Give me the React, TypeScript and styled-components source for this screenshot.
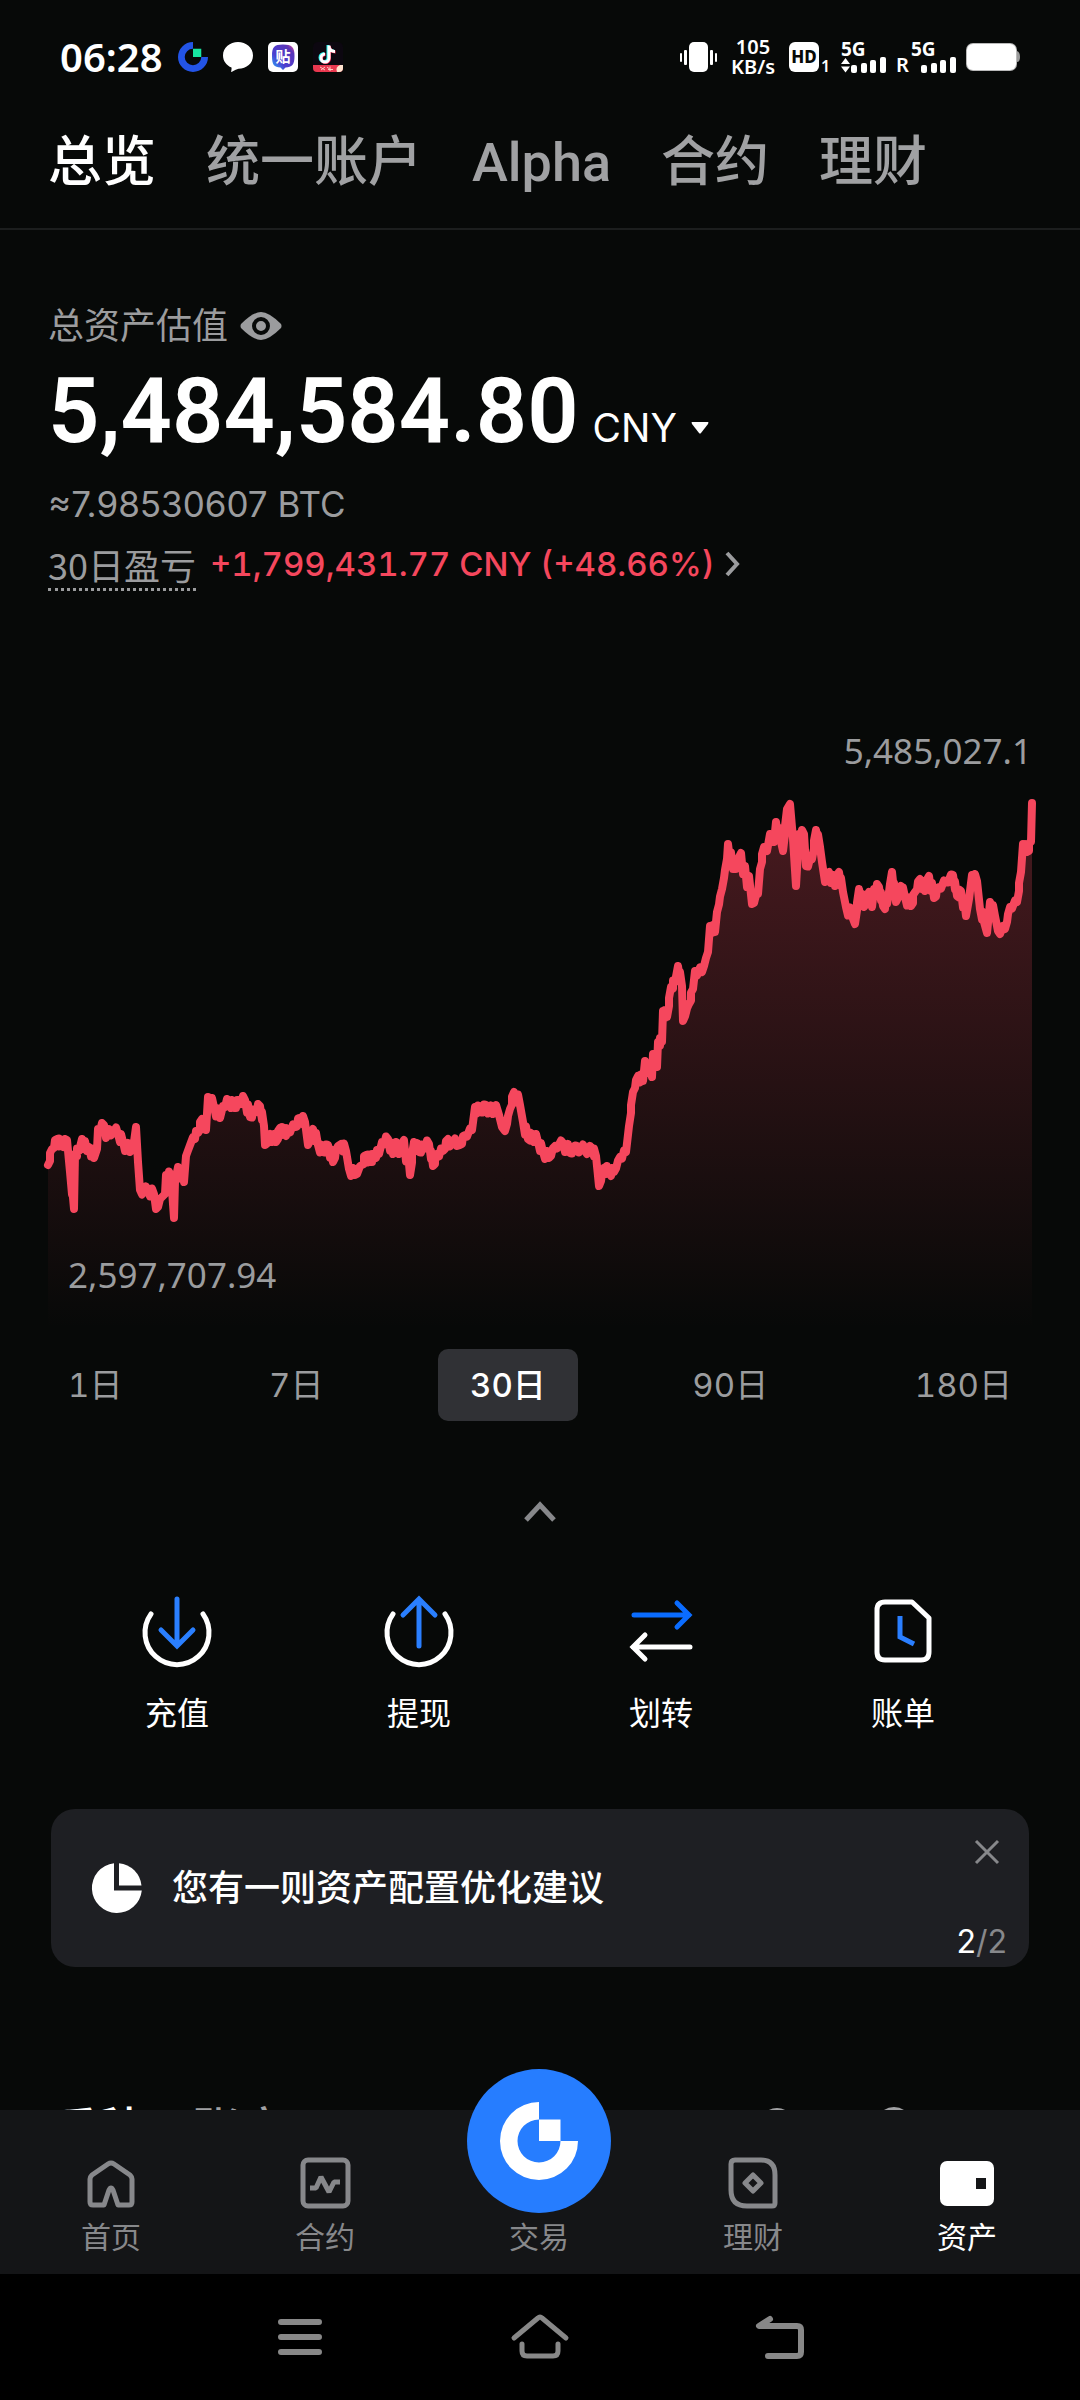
import React, { useState } from "react";
import styled, { createGlobalStyle } from "styled-components";

const color = {
  page: "#070908",
  white: "#ffffff",
  muted: "#9b9c9e",
  tab: "#a0a1a3",
  dim: "#87888b",
  line: "#1c1e1e",
  red: "#f5475d",
  blue: "#267dff",
  card: "#1e1f23",
  chip: "#303135",
  bar: "#141517",
};

const ui = `Inter, "Noto Sans CJK SC", sans-serif`;
const heading = `Roboto, "Noto Sans CJK SC", sans-serif`;
const cjk = `"Noto Sans CJK SC", sans-serif`;
const system = `"Noto Sans", "Noto Sans CJK SC", sans-serif`;

const GlobalStyle = createGlobalStyle`
  * { box-sizing: border-box; }
  body { margin: 0; background: ${color.page}; }
  button { margin: 0; padding: 0; border: 0; background: none; color: inherit; font: inherit; cursor: pointer; }
  a { color: inherit; text-decoration: none; }
  svg { display: block; flex: none; overflow: visible; }
`;

const Screen = styled.div`
  display: flex;
  flex-direction: column;
  height: 100vh;
  background: ${color.page};
  color: ${color.white};
  font-family: ${ui};
`;

const StatusBar = styled.header`
  display: flex;
  justify-content: space-between;
  align-items: center;
  flex: none;
  height: 114px;
  padding: 0 60px;
  font-family: ${system};
`;

const StatusGroup = styled.div<{ $gap: number }>`
  display: flex;
  align-items: center;
  gap: ${(p) => p.$gap}px;
`;

const Clock = styled.time`
  font-size: 40px;
  line-height: 48px;
  font-weight: 600;
`;

const NetSpeed = styled.div`
  display: flex;
  flex-direction: column;
  align-items: center;
  padding: 0 4px;
  font-size: 20px;
  line-height: 20px;
  font-weight: 600;
`;

const AccountTabs = styled.nav`
  display: flex;
  align-items: center;
  flex: none;
  gap: 50px;
  height: 116px;
  padding: 0 48px 16px;
  border-bottom: 2px solid ${color.line};
  white-space: nowrap;
  overflow: hidden;
`;

const AccountTab = styled.button<{ $active?: boolean }>`
  font-family: ${heading};
  font-size: 54px;
  line-height: 72px;
  font-weight: 500;
  color: ${(p) => (p.$active ? color.white : color.tab)};
`;

const Main = styled.main`
  flex: 1;
  min-height: 0;
  overflow-y: auto;
  scrollbar-width: none;
`;

const Summary = styled.section`
  display: flex;
  flex-direction: column;
  align-items: flex-start;
  padding: 72px 48px 0;
`;

const SummaryLabel = styled.div`
  display: flex;
  align-items: center;
  gap: 12px;
  font-size: 36px;
  line-height: 48px;
  color: ${color.muted};
`;

const BalanceRow = styled.div`
  display: flex;
  align-items: baseline;
  gap: 14px;
  margin-top: 10px;
`;

const Balance = styled.strong`
  font-family: ${heading};
  font-size: 90px;
  line-height: 104px;
  font-weight: 600;
`;

const CurrencyButton = styled.button`
  display: flex;
  align-items: center;
  gap: 14px;
  font-size: 39px;
  line-height: 48px;
`;

const BtcValue = styled.div`
  margin-top: 16px;
  font-size: 35px;
  line-height: 48px;
  color: ${color.muted};
`;

const ProfitRow = styled.div`
  display: flex;
  align-items: flex-start;
  gap: 14px;
  margin-top: 12px;
  line-height: 48px;
`;

const ProfitLabel = styled.span`
  border-bottom: 3px dotted ${color.muted};
  font-family: ${cjk};
  font-size: 36px;
  color: ${color.muted};
`;

const ProfitLink = styled.a`
  display: flex;
  align-items: center;
  gap: 10px;
  font-size: 33px;
  font-weight: 500;
  font-variant-numeric: tabular-nums;
  color: ${color.red};
`;

const ChartSection = styled.section`
  padding: 136px 48px 0;
`;

const ChartLabel = styled.div`
  font-family: ${system};
  font-size: 35px;
  line-height: 48px;
  color: ${color.muted};
`;

const MaxLabel = styled(ChartLabel)`
  text-align: right;
`;

const ChartFrame = styled.div`
  position: relative;
  margin-top: 20px;
  svg { width: 100%; height: auto; }
`;

const MinLabel = styled(ChartLabel)`
  position: absolute;
  left: 20px;
  bottom: 36px;
`;

const Ranges = styled.div`
  display: flex;
  justify-content: space-between;
  padding: 14px 36px 0;
`;

const RangeButton = styled.button<{ $active: boolean }>`
  height: 72px;
  padding: 0 32px;
  border-radius: 10px;
  background: ${(p) => (p.$active ? color.chip : "transparent")};
  color: ${(p) => (p.$active ? color.white : color.muted)};
  font-size: 33px;
  line-height: 48px;
  font-weight: ${(p) => (p.$active ? 500 : 400)};
  font-variant-numeric: tabular-nums;
`;

const Collapse = styled.div`
  display: flex;
  justify-content: center;
  padding-top: 66px;
`;

const IconButton = styled.button<{ $size: number }>`
  display: flex;
  align-items: center;
  justify-content: center;
  width: ${(p) => p.$size}px;
  height: ${(p) => p.$size}px;
`;

const Actions = styled.div`
  display: grid;
  grid-template-columns: repeat(4, 1fr);
  padding: 60px 56px 0;
`;

const ActionButton = styled.button`
  display: flex;
  flex-direction: column;
  align-items: center;
  gap: 23px;
  font-size: 32px;
  line-height: 48px;
`;

const Notice = styled.aside`
  display: flex;
  align-items: center;
  gap: 30px;
  min-height: 158px;
  margin: 71px 51px 0;
  padding: 0 22px 0 41px;
  border-radius: 24px;
  background: ${color.card};
`;

const NoticeText = styled.p`
  flex: 1;
  margin: 0;
  font-size: 36px;
  line-height: 48px;
  font-weight: 500;
`;

const NoticeSide = styled.div`
  display: flex;
  flex-direction: column;
  align-items: flex-end;
  justify-content: space-between;
  align-self: stretch;
  padding: 23px 0 9px;
`;

const Pager = styled.span`
  font-size: 32px;
  line-height: 32px;
  color: ${color.dim};
  b { font-weight: 400; color: ${color.white}; }
`;

const ListHeader = styled.div`
  display: flex;
  align-items: flex-start;
  justify-content: space-between;
  padding: 127px 167px 0 48px;
`;

const ListTabs = styled.div`
  display: flex;
  gap: 48px;
`;

const ListTab = styled.button<{ $active?: boolean }>`
  font-size: 48px;
  line-height: 72px;
  font-weight: 500;
  color: ${(p) => (p.$active ? color.white : color.tab)};
`;

const ListTools = styled.div`
  display: flex;
  gap: 78px;
  padding-top: 13px;
  color: ${color.tab};
`;

const BottomNav = styled.nav`
  display: grid;
  grid-template-columns: repeat(5, 1fr);
  grid-template-rows: 100%;
  flex: none;
  height: 164px;
  padding: 0 6px 0 4px;
  background: ${color.bar};
`;

const NavItem = styled.a<{ $active?: boolean }>`
  display: flex;
  flex-direction: column;
  align-items: center;
  justify-content: flex-end;
  gap: 4px;
  padding-bottom: 13px;
  font-size: 30px;
  line-height: 48px;
  color: ${(p) => (p.$active ? color.white : color.dim)};
`;

const TradeBadge = styled.span`
  display: flex;
  align-items: center;
  justify-content: center;
  flex: none;
  position: relative;
  width: 144px;
  height: 144px;
  margin-bottom: -4px;
  border-radius: 50%;
  background: ${color.blue};
`;

const SystemNav = styled.footer`
  display: flex;
  align-items: center;
  justify-content: center;
  gap: 168px;
  flex: none;
  height: 126px;
  background: #000000;
  color: #888888;
`;

const history: [number, number][] = [
  [48, 1166], [52, 1150], [57, 1140], [61, 1147], [67, 1141], [70, 1173], [74, 1210], [75, 1155], [79, 1152], [82, 1140],
  [87, 1152], [89, 1148], [94, 1159], [97, 1150], [98, 1130], [104, 1126], [106, 1139], [109, 1130], [118, 1135], [123, 1143],
  [130, 1153], [133, 1150], [136, 1128], [138, 1163], [140, 1191], [148, 1192], [154, 1195], [156, 1210], [162, 1198], [165, 1195],
  [166, 1176], [171, 1177], [174, 1219], [175, 1183], [178, 1168], [184, 1183], [186, 1157], [193, 1138], [198, 1134], [202, 1120],
  [206, 1131], [208, 1098], [214, 1108], [220, 1119], [223, 1107], [229, 1101], [234, 1109], [239, 1101], [245, 1101], [250, 1118],
  [255, 1111], [260, 1107], [264, 1127], [265, 1146], [270, 1135], [276, 1143], [280, 1129], [284, 1135], [288, 1131], [295, 1128],
  [300, 1119], [305, 1123], [308, 1146], [313, 1130], [318, 1146], [323, 1153], [328, 1146], [333, 1163], [338, 1147], [341, 1145],
  [346, 1152], [349, 1170], [355, 1176], [362, 1166], [366, 1156], [370, 1163], [374, 1155], [379, 1155], [382, 1143], [388, 1140],
  [393, 1155], [396, 1143], [399, 1155], [404, 1141], [410, 1176], [414, 1143], [419, 1153], [423, 1146], [429, 1145], [433, 1167],
  [437, 1155], [443, 1152], [448, 1140], [457, 1147], [460, 1146], [465, 1136], [472, 1131], [475, 1108], [480, 1113], [486, 1106],
  [493, 1115], [496, 1106], [499, 1116], [502, 1128], [505, 1132], [510, 1110], [514, 1093], [520, 1106], [523, 1123], [528, 1140],
  [532, 1135], [538, 1143], [543, 1153], [549, 1159], [555, 1147], [563, 1144], [570, 1154], [577, 1147], [585, 1152], [592, 1150],
  [596, 1157], [599, 1187], [604, 1169], [609, 1173], [614, 1173], [620, 1158], [626, 1153], [629, 1127], [633, 1093], [638, 1077],
  [643, 1082], [645, 1062], [652, 1078], [653, 1055], [657, 1068], [658, 1043], [662, 1043], [663, 1012], [667, 1018], [671, 988],
  [675, 983], [678, 967], [682, 987], [683, 1022], [689, 1005], [693, 990], [695, 972], [702, 973], [708, 953], [710, 927],
  [715, 933], [717, 913], [722, 890], [727, 860], [728, 845], [733, 870], [736, 870], [741, 854], [747, 888], [749, 877],
  [752, 905], [758, 895], [760, 870], [764, 848], [767, 852], [770, 835], [774, 843], [776, 823], [781, 843], [783, 852],
  [787, 810], [790, 805], [793, 840], [796, 887], [799, 835], [804, 835], [806, 867], [812, 860], [816, 831], [820, 848],
  [822, 863], [825, 883], [829, 873], [835, 887], [839, 873], [843, 893], [846, 908], [852, 917], [855, 925], [859, 890],
  [864, 908], [869, 893], [872, 908], [874, 890], [879, 888], [883, 907], [887, 905], [892, 873], [896, 903], [901, 887],
  [905, 898], [911, 907], [915, 893], [920, 880], [925, 892], [929, 877], [934, 899], [939, 888], [946, 883], [953, 876],
  [957, 897], [961, 892], [966, 917], [969, 900], [972, 876], [977, 882], [980, 910], [984, 923], [987, 934], [990, 903],
  [995, 917], [998, 932], [1005, 930], [1010, 908], [1017, 903], [1021, 873], [1023, 845], [1027, 853], [1031, 843], [1032, 804],
];

// Each step dips a little halfway, which gives the line its tick-by-tick roughness.
const ticks = history.flatMap(([x, y], i) => {
  const next = history[i + 1];
  if (!next || next[0] - x < 4) return [[x, y]];
  const middle = (y + next[1]) / 2;
  return [[x, y], [x + 2, middle + 4], [next[0] - 2, middle - 4]];
});

const linePath = "M" + ticks.map(([x, y]) => `${x} ${y}`).join("L");

const PnlChart = () => (
  <svg viewBox="48 796 984 540" role="img" aria-label="30日资产走势">
    <defs>
      <linearGradient id="pnl" gradientUnits="userSpaceOnUse" x1="0" y1="800" x2="0" y2="1330">
        <stop offset="0" stopColor={color.red} stopOpacity="0.280" />
        <stop offset="1" stopColor={color.red} stopOpacity="0" />
      </linearGradient>
    </defs>
    <path d={`${linePath}V1330H48Z`} fill="url(#pnl)" />
    <path d={linePath} fill="none" stroke={color.red} strokeWidth="8" strokeLinecap="round" strokeLinejoin="round" />
  </svg>
);

const GateLogo = ({ size, ring, tile }: { size: number; ring: string; tile: string }) => (
  <svg width={size} height={size} viewBox="-39 -39 78 78" aria-hidden="true">
    <path d="M0-39A39 39 0 1 0 39 0H21.500A21.500 21.500 0 1 1 0-21.500Z" fill={ring} />
    <path d="M0-21.500H21.500V0H0Z" fill={tile} />
  </svg>
);

const ChatIcon = () => (
  <svg width="30" height="30" viewBox="0 0 30 30" fill="#fff" aria-hidden="true">
    <path d="M15 0C23 0 30 5.500 30 13.500S23.500 26.500 15.500 26.800C13.500 27 12.500 28.500 8 30C8.500 28 8.700 27 8.500 25.500C3.500 23.500 0 19 0 13.500C0 5.500 7 0 15 0Z" />
  </svg>
);

const TiebaIcon = () => (
  <svg width="30" height="30" viewBox="0 0 30 30" aria-hidden="true">
    <defs>
      <linearGradient id="tieba" x1="0" y1="1" x2="1" y2="0">
        <stop offset="0" stopColor="#28b4ff" />
        <stop offset="0.350" stopColor="#4a3fd0" />
        <stop offset="0.800" stopColor="#5a35b8" />
        <stop offset="1" stopColor="#ff4f8a" />
      </linearGradient>
    </defs>
    <rect width="30" height="30" rx="5" fill="#fff" />
    <path d="M15 2.500C24 2.500 26.500 5 26.500 14S24 25 17.500 25.500L15 28L12.500 25.500C6 25 4 23 4 14S6 2.500 15 2.500Z" fill="url(#tieba)" />
    <text x="15" y="20" textAnchor="middle" fontFamily={cjk} fontSize="15" fontWeight="700" fill="#fff">贴</text>
  </svg>
);

const DouyinIcon = () => (
  <svg width="30" height="30" viewBox="0 0 30 30" aria-hidden="true">
    <rect width="30" height="30" rx="5" fill="#0c0710" />
    <g fill="none" strokeWidth="3">
      <path d="M15 3V15.500A4 4 0 1 1 11 11.500M15 4C15.500 7 18 9 21 9" stroke="#25f4ee" />
      <path d="M16.500 4V16.500A4 4 0 1 1 12.500 12.500M16.500 5C17 8 19.500 10 22.500 10" stroke="#fe2c55" />
      <path d="M16 3.500V16A4 4 0 1 1 12 12M16 4.500C16.500 7.500 19 9.500 22 9.500" stroke="#fff" />
    </g>
    <path d="M0 23H30V26Q30 30 26 30H4Q0 30 0 26Z" fill="#e9384f" />
    <path d="M24 30Q22 25 27 23H30V26Q30 30 26 30Z" fill="#ffe3cf" />
    <path d="M7 25L12 28M8 28L12 25M14 25L18 28M15 27.500H20M17 24.500V29" stroke="#ffc9c0" strokeWidth="1" />
  </svg>
);

const VibrateIcon = () => (
  <svg width="37" height="30" viewBox="0 0 37 30" fill="#fff" aria-hidden="true">
    <rect x="9" width="19" height="30" rx="5" />
    <rect x="0" y="11" width="2" height="9" rx="1" />
    <rect x="4" y="8" width="3" height="15" rx="1" />
    <rect x="30" y="8" width="3" height="15" rx="1" />
    <rect x="35" y="11" width="2" height="9" rx="1" />
  </svg>
);

const HdIcon = () => (
  <svg width="42" height="30" viewBox="0 0 42 30" aria-label="HD 1">
    <rect width="30" height="30" rx="6" fill="#fff" />
    <text x="15" y="21" textAnchor="middle" fontFamily={system} fontSize="17" fontWeight="800" fill={color.page}>HD</text>
    <text x="32" y="30" fontFamily={system} fontSize="16" fontWeight="600" fill="#fff">1</text>
  </svg>
);

const Bars = ({ x }: { x: number }) => (
  <g>
    <rect x={x} y="24" width="6" height="8" rx="2" />
    <rect x={x + 10} y="22" width="6" height="10" rx="2" />
    <rect x={x + 19} y="19" width="6" height="13" rx="2" />
    <rect x={x + 29} y="16" width="6" height="16" rx="2" />
  </g>
);

const SignalOne = () => (
  <svg width="45" height="32" viewBox="0 0 45 32" fill="#fff" aria-label="5G">
    <text x="0" y="15" fontFamily={system} fontSize="19" fontWeight="700">5G</text>
    <path d="M0 23L4.500 17L9 23ZM0 25.500L4.500 31.500L9 25.500Z" />
    <Bars x={10} />
  </svg>
);

const SignalTwo = () => (
  <svg width="60" height="32" viewBox="0 0 60 32" fill="#fff" aria-label="R 5G">
    <text x="0" y="31" fontFamily={system} fontSize="20" fontWeight="600">R</text>
    <text x="15" y="15" fontFamily={system} fontSize="19" fontWeight="700">5G</text>
    <Bars x={25} />
  </svg>
);

const BatteryIcon = () => (
  <svg width="54" height="28" viewBox="0 0 54 28" aria-hidden="true">
    <path d="M49 8H51Q54 9 54 14T51 19H49Z" fill="#9a9a9a" />
    <rect width="51" height="28" rx="7" fill="#b9b9b9" />
    <rect x="1" y="1" width="49" height="26" rx="6" fill="#fff" />
  </svg>
);

const EyeIcon = () => (
  <svg width="42" height="30" viewBox="0 0 42 30" aria-hidden="true">
    <path d="M1 13Q13 1 21 1T41 13Q42 15 41 17Q29 29 21 29T1 17Q0 15 1 13Z" fill={color.muted} />
    <circle cx="21" cy="15" r="7" fill={color.muted} stroke={color.page} strokeWidth="4" />
  </svg>
);

const DepositIcon = () => (
  <svg width="72" height="72" viewBox="0 0 72 72" fill="none" strokeWidth="5" strokeLinecap="round" aria-hidden="true">
    <path d="M10 19A32 32 0 1 0 62 19" stroke="#fff" />
    <path d="M36 4V50M20 35L36 51L52 35" stroke="#2a7fff" />
  </svg>
);

const WithdrawIcon = () => (
  <svg width="72" height="72" viewBox="0 0 72 72" fill="none" strokeWidth="5" strokeLinecap="round" aria-hidden="true">
    <path d="M10 19A32 32 0 1 0 62 19" stroke="#fff" />
    <path d="M36 51V5M20 20L36 4L52 20" stroke="#2a7fff" />
  </svg>
);

const TransferIcon = () => (
  <svg width="72" height="72" viewBox="0 0 72 72" fill="none" strokeWidth="5" strokeLinecap="round" aria-hidden="true">
    <path d="M9 20H64M52 8L64 20L52 32" stroke="#0a6cff" />
    <path d="M65 52H8M20 40L8 52L20 64" stroke="#fff" />
  </svg>
);

const BillIcon = () => (
  <svg width="72" height="72" viewBox="0 0 72 72" fill="none" strokeWidth="5" aria-hidden="true">
    <path d="M18 7H45L62 23V57Q62 65 54 65H18Q10 65 10 57V15Q10 7 18 7Z" stroke="#fff" strokeLinejoin="round" />
    <path d="M33 21V42L47 49" stroke="#2a7fff" />
  </svg>
);

const HomeIcon = () => (
  <svg width="52" height="52" viewBox="0 0 52 52" fill="none" stroke="currentColor" strokeWidth="5" strokeLinejoin="round" aria-hidden="true">
    <path d="M8 48Q5 48 5 45V22Q5 20 7 18L23 7Q26 5 29 7L45 18Q47 20 47 22V45Q47 48 44 48H33L28 33Q26 29 24 33L19 48Z" />
  </svg>
);

const ContractIcon = () => (
  <svg width="52" height="52" viewBox="0 0 52 52" fill="none" stroke="currentColor" strokeWidth="5" aria-hidden="true">
    <rect x="4" y="3" width="45" height="46" rx="5" />
    <path d="M11 31H17L22 20L30 35L35 25H41" strokeLinejoin="bevel" />
  </svg>
);

const EarnIcon = () => (
  <svg width="52" height="52" viewBox="0 0 52 52" fill="none" stroke="currentColor" strokeWidth="5" aria-hidden="true">
    <path d="M8 3H34Q48 3 48 18V46Q48 49 45 49H20Q4 49 4 33V7Q4 3 8 3Z" />
    <path d="M26 18L34 26L26 34L18 26Z" strokeLinejoin="round" />
  </svg>
);

const WalletIcon = () => (
  <svg width="54" height="52" viewBox="0 0 54 52" aria-hidden="true">
    <rect x="0" y="4" width="54" height="45" rx="7" fill="#fff" />
    <rect x="36" y="21" width="10" height="11" fill={color.bar} />
  </svg>
);

const ranges = ["1日", "7日", "30日", "90日", "180日"];
const accountTabs = ["总览", "统一账户", "Alpha", "合约", "理财"];
const actions = [
  { label: "充值", icon: <DepositIcon /> },
  { label: "提现", icon: <WithdrawIcon /> },
  { label: "划转", icon: <TransferIcon /> },
  { label: "账单", icon: <BillIcon /> },
];

export default function App() {
  const [tab, setTab] = useState("总览");
  const [range, setRange] = useState("30日");

  return (
    <Screen>
      <GlobalStyle />
      <StatusBar>
        <StatusGroup $gap={15}>
          <Clock>06:28</Clock>
          <GateLogo size={30} ring="#2354e6" tile="#17e6a1" />
          <ChatIcon />
          <TiebaIcon />
          <DouyinIcon />
        </StatusGroup>
        <StatusGroup $gap={10}>
          <VibrateIcon />
          <NetSpeed>
            <span>105</span>
            <span>KB/s</span>
          </NetSpeed>
          <HdIcon />
          <SignalOne />
          <SignalTwo />
          <BatteryIcon />
        </StatusGroup>
      </StatusBar>

      <AccountTabs>
        {accountTabs.map((name) => (
          <AccountTab key={name} $active={name === tab} onClick={() => setTab(name)}>
            {name}
          </AccountTab>
        ))}
      </AccountTabs>

      <Main>
        <Summary>
          <SummaryLabel>
            总资产估值
            <button aria-label="隐藏资产">
              <EyeIcon />
            </button>
          </SummaryLabel>
          <BalanceRow>
            <Balance>5,484,584.80</Balance>
            <CurrencyButton>
              CNY
              <svg width="18" height="12" viewBox="0 0 18 12" fill="#fff" aria-hidden="true">
                <path d="M1 0H17Q18 0 17 2L10 11Q9 12 8 11L1 2Q0 0 1 0Z" />
              </svg>
            </CurrencyButton>
          </BalanceRow>
          <BtcValue>≈7.98530607 BTC</BtcValue>
          <ProfitRow>
            <ProfitLabel>30日盈亏</ProfitLabel>
            <ProfitLink href="#pnl">
              +1,799,431.77 CNY (+48.66%)
              <svg width="15" height="24" viewBox="0 0 15 24" fill="none" stroke={color.muted} strokeWidth="4" aria-hidden="true">
                <path d="M2 1L12 12L2 23" />
              </svg>
            </ProfitLink>
          </ProfitRow>
        </Summary>

        <ChartSection>
          <MaxLabel>5,485,027.1</MaxLabel>
          <ChartFrame>
            <PnlChart />
            <MinLabel>2,597,707.94</MinLabel>
          </ChartFrame>
        </ChartSection>

        <Ranges>
          {ranges.map((name) => (
            <RangeButton key={name} $active={name === range} onClick={() => setRange(name)}>
              {name}
            </RangeButton>
          ))}
        </Ranges>

        <Collapse>
          <IconButton $size={48} aria-label="收起">
            <svg width="32" height="20" viewBox="0 0 32 20" fill="none" stroke={color.dim} strokeWidth="5" aria-hidden="true">
              <path d="M2 19L16 4L30 19" />
            </svg>
          </IconButton>
        </Collapse>

        <Actions>
          {actions.map(({ label, icon }) => (
            <ActionButton key={label}>
              {icon}
              {label}
            </ActionButton>
          ))}
        </Actions>

        <Notice>
          <svg width="50" height="50" viewBox="0 0 50 50" fill="#fff" aria-hidden="true">
            <path d="M22 0.200V27.500H49.800A25 25 0 1 1 22 0.200Z" />
            <path d="M27 0.200A25 25 0 0 1 49.500 22.500H27Z" />
          </svg>
          <NoticeText>您有一则资产配置优化建议</NoticeText>
          <NoticeSide>
            <IconButton $size={40} aria-label="关闭">
              <svg width="24" height="24" viewBox="0 0 24 24" fill="none" stroke={color.dim} strokeWidth="3" aria-hidden="true">
                <path d="M1 1L23 23M23 1L1 23" />
              </svg>
            </IconButton>
            <Pager>
              <b>2</b>/2
            </Pager>
          </NoticeSide>
        </Notice>

        <ListHeader>
          <ListTabs>
            <ListTab $active>币种</ListTab>
            <ListTab>账户</ListTab>
          </ListTabs>
          <ListTools>
            <IconButton $size={38} aria-label="搜索">
              <svg width="38" height="38" viewBox="0 0 38 38" fill="none" stroke="currentColor" strokeWidth="4" aria-hidden="true">
                <circle cx="18" cy="18" r="15" />
                <path d="M29 29L36 36" />
              </svg>
            </IconButton>
            <IconButton $size={38} aria-label="设置">
              <svg width="38" height="38" viewBox="0 0 38 38" fill="none" stroke="currentColor" strokeWidth="4" aria-hidden="true">
                <circle cx="19" cy="18" r="16" />
                <circle cx="19" cy="18" r="5" />
              </svg>
            </IconButton>
          </ListTools>
        </ListHeader>
      </Main>

      <BottomNav>
        <NavItem href="#home">
          <HomeIcon />
          首页
        </NavItem>
        <NavItem href="#contract">
          <ContractIcon />
          合约
        </NavItem>
        <NavItem href="#trade">
          <TradeBadge>
            <GateLogo size={78} ring="#fff" tile="#fff" />
          </TradeBadge>
          交易
        </NavItem>
        <NavItem href="#earn">
          <EarnIcon />
          理财
        </NavItem>
        <NavItem href="#assets" $active>
          <WalletIcon />
          资产
        </NavItem>
      </BottomNav>

      <SystemNav>
        <IconButton $size={72} aria-label="最近任务">
          <svg width="46" height="40" viewBox="0 0 46 40" fill="none" stroke="currentColor" strokeWidth="6" strokeLinecap="round" aria-hidden="true">
            <path d="M4 5H42M4 20H42M4 35H42" />
          </svg>
        </IconButton>
        <IconButton $size={72} aria-label="主屏幕">
          <svg width="58" height="46" viewBox="0 0 58 46" fill="none" stroke="currentColor" strokeWidth="5" strokeLinecap="round" strokeLinejoin="round" aria-hidden="true">
            <path d="M3 24L27 4Q29 2 31 4L55 24" />
            <path d="M11 30V37Q11 42 16 42H42Q47 42 47 37V30" />
          </svg>
        </IconButton>
        <IconButton $size={72} aria-label="返回">
          <svg width="50" height="46" viewBox="0 0 50 46" fill="none" stroke="currentColor" strokeWidth="6" strokeLinecap="round" strokeLinejoin="round" aria-hidden="true">
            <path d="M15 5L4 12H42Q46 12 46 16V38Q46 42 42 42H13" />
          </svg>
        </IconButton>
      </SystemNav>
    </Screen>
  );
}
